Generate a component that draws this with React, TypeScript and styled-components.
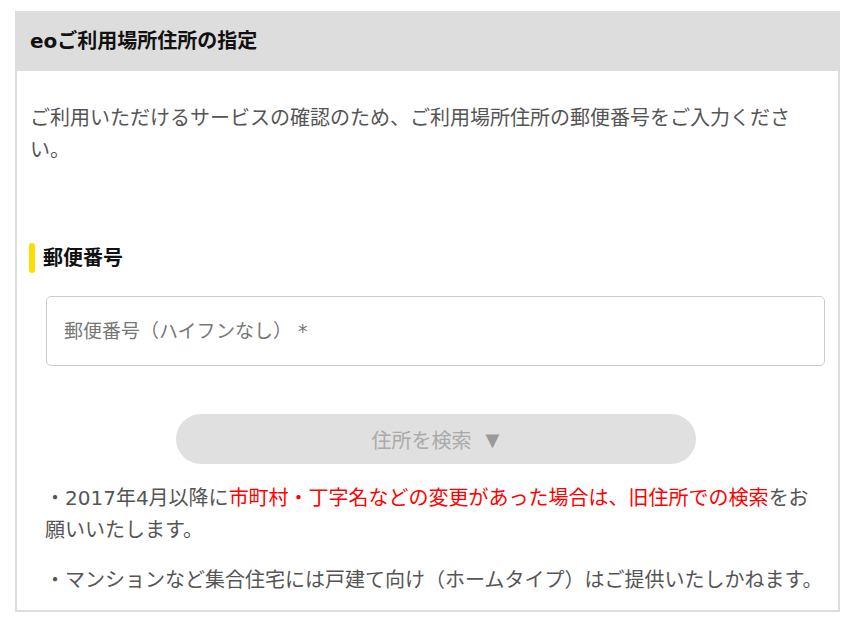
import React from "react";
import styled, { createGlobalStyle } from "styled-components";

const GlobalStyle = createGlobalStyle`
  html, body {
    margin: 0;
    padding: 0;
    background: #ffffff;
    font-family: "DejaVu Sans", "Noto Sans CJK JP", sans-serif;
  }
  * { box-sizing: border-box; }
`;

const Page = styled.div`
  padding: 11px 17px 11px 15px;
`;

const Card = styled.section`
  width: 825px;
  border: 2px solid #dddddd;
  border-top: none;
  background: #ffffff;
`;

const Header = styled.header`
  height: 60px;
  margin: 0 -2px;
  padding-left: 15px;
  display: flex;
  align-items: center;
  background: #dddddd;
`;

const Title = styled.h2`
  margin: 0;
  font-size: 20px;
  font-weight: 700;
  color: #111111;
  line-height: 1;
`;

const Body = styled.div`
  padding: 31px 13px 14px 13px;
`;

const Intro = styled.p`
  margin: 0;
  padding-right: 30px;
  font-size: 20px;
  line-height: 32px;
  color: #555555;
`;

const SectionHeading = styled.h3`
  margin: 77px 0 0 -1px;
  height: 30px;
  display: flex;
  align-items: center;
  gap: 8px;
  font-size: 20px;
  font-weight: 700;
  color: #111111;
  line-height: 1;
`;

const Bar = styled.span`
  width: 6px;
  height: 30px;
  border-radius: 3px;
  background: #ffdd00;
`;

const FormArea = styled.div`
  padding-left: 16px;
`;

const Input = styled.input`
  display: block;
  width: 100%;
  height: 70px;
  margin-top: 23px;
  padding: 0 17px;
  border: 1px solid #cccccc;
  border-radius: 5px;
  font-family: inherit;
  font-size: 19px;
  color: #333333;
  outline: none;
  &::placeholder {
    color: #777777;
  }
`;

const SearchButton = styled.button`
  display: flex;
  align-items: center;
  justify-content: center;
  gap: 14px;
  width: 520px;
  height: 50px;
  margin: 48px auto 0;
  border: none;
  border-radius: 25px;
  background: #e0e0e0;
  color: #aaaaaa;
  font-family: inherit;
  font-size: 20px;
  cursor: default;
`;

const Arrow = styled.span`
  color: #999999;
  font-size: 18px;
`;

const Notes = styled.ul`
  list-style: none;
  margin: 18px -2px 0 -1px;
  padding: 0;
  display: flex;
  flex-direction: column;
  gap: 18px;
`;

const Note = styled.li`
  font-size: 20px;
  line-height: 32px;
  color: #555555;
`;

const Red = styled.span`
  color: #ff0000;
`;

export default function App() {
  return (
    <>
      <GlobalStyle />
      <Page>
        <Card>
          <Header>
            <Title>eoご利用場所住所の指定</Title>
          </Header>
          <Body>
            <Intro>
              ご利用いただけるサービスの確認のため、ご利用場所住所の郵便番号をご入力ください。
            </Intro>
            <SectionHeading>
              <Bar />
              郵便番号
            </SectionHeading>
            <FormArea>
              <Input placeholder="郵便番号（ハイフンなし） *" />
              <SearchButton type="button">
                住所を検索
                <Arrow>▼</Arrow>
              </SearchButton>
              <Notes>
                <Note>
                  ・2017年4月以降に<Red>市町村・丁字名などの変更があった場合は、旧住所での検索</Red>をお願いいたします。
                </Note>
                <Note>・マンションなど集合住宅には戸建て向け（ホームタイプ）はご提供いたしかねます。</Note>
              </Notes>
            </FormArea>
          </Body>
        </Card>
      </Page>
    </>
  );
}
